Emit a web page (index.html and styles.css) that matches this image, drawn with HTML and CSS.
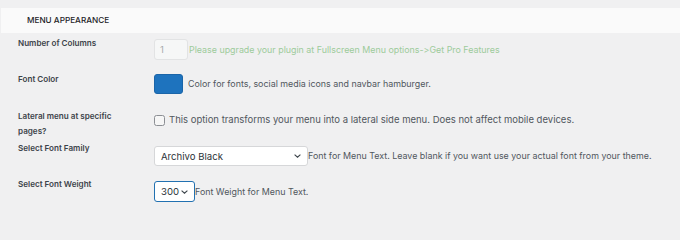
FILE: index.html
```html
<!DOCTYPE html>
<html>
<head>
<meta charset="utf-8">
<link rel="stylesheet" href="styles.css">
</head>
<body>
<div class="page">
  <div class="section-head">MENU APPEARANCE</div>
  <div class="form">
    <div class="row r1">
      <div class="label">Number of Columns</div>
      <div class="field">
        <div class="num-input">1</div>
        <span class="desc pro">Please upgrade your plugin at Fullscreen Menu options-&gt;Get Pro Features</span>
      </div>
    </div>
    <div class="row r2">
      <div class="label">Font Color</div>
      <div class="field">
        <div class="swatch"></div>
        <span class="desc gap">Color for fonts, social media icons and navbar hamburger.</span>
      </div>
    </div>
    <div class="row r3">
      <div class="label">Lateral menu at specific<br>pages?</div>
      <div class="field">
        <div class="checkbox"></div>
        <span class="desc check-text">This option transforms your menu into a lateral side menu. Does not affect mobile devices.</span>
      </div>
    </div>
    <div class="row r4">
      <div class="label">Select Font Family</div>
      <div class="field">
        <div class="select wide"><span>Archivo Black</span><svg class="chev" width="7" height="4" viewBox="0 0 7 4"><path d="M0.6 0.6 L3.5 3.2 L6.4 0.6" fill="none" stroke="#3c434a" stroke-width="1.1"/></svg></div>
        <span class="desc">Font for Menu Text. Leave blank if you want use your actual font from your theme.</span>
      </div>
    </div>
    <div class="row r5">
      <div class="label">Select Font Weight</div>
      <div class="field">
        <div class="select narrow focus"><span>300</span><svg class="chev" width="7" height="4" viewBox="0 0 7 4"><path d="M0.6 0.6 L3.5 3.2 L6.4 0.6" fill="none" stroke="#3c434a" stroke-width="1.1"/></svg></div>
        <span class="desc">Font Weight for Menu Text.</span>
      </div>
    </div>
  </div>
</div>
</body>
</html>
```
FILE: styles.css
```css
html, body {
  margin: 0;
  padding: 0;
  background: #f0f0f1;
}
body {
  font-family: Inter, "Noto Sans", sans-serif;
  font-variant-ligatures: none;
  font-feature-settings: "calt" 0, "liga" 0;
  color: #50575e;
}
.page {
  padding-top: 8px;
}
.section-head {
  margin-left: 1px;
  height: 25px;
  background: #fafafa;
  box-sizing: border-box;
  padding-left: 26px;
  font-size: 8.2px;
  font-weight: 500;
  line-height: 25px;
  color: #1d2327;
}
.form {
  padding-top: 3px;
}
.row {
  display: flex;
  align-items: flex-start;
}
.r1 { height: 36px; }
.r2 { height: 37px; }
.r3 { height: 32px; }
.r4 { height: 36px; }
.r5 { height: 34px; }
.label {
  width: 154px;
  flex: none;
  box-sizing: border-box;
  padding-left: 18px;
  font-size: 8.1px;
  font-weight: 600;
  line-height: 14.5px;
  color: #3c434a;
}
.field {
  display: flex;
  align-items: center;
}
.r1 .field { padding-top: 3px; }
.r2 .field { padding-top: 2px; }
.r3 .field { padding-top: 4px; }
.r4 .field { padding-top: 5px; }
.r5 .field { padding-top: 4px; }
.desc {
  font-size: 8.9px;
  line-height: 14px;
  color: #50575e;
  white-space: nowrap;
}
.desc.pro {
  color: #9dcb9b;
  margin-left: 1px;
}
.desc.gap {
  margin-left: 5px;
}
.desc.check-text {
  font-size: 9.5px;
  margin-left: 4px;
}
.num-input {
  width: 34px;
  height: 21px;
  box-sizing: border-box;
  border: 1px solid #e2e3e4;
  border-radius: 3px;
  background: #f6f7f7;
  color: #a7aaad;
  font-size: 9.5px;
  line-height: 19px;
  padding-left: 5px;
}
.swatch {
  width: 29px;
  height: 20px;
  box-sizing: border-box;
  background: #1e73be;
  border: 1px solid #1b65a8;
  border-radius: 3px;
}
.checkbox {
  width: 11px;
  height: 11px;
  box-sizing: border-box;
  border: 1px solid #8c8f94;
  border-radius: 2.5px;
  background: #f6f6f6;
}
.select {
  height: 20px;
  box-sizing: border-box;
  border: 1px solid #d6d7d9;
  border-radius: 3px;
  background: #ffffff;
  display: flex;
  align-items: center;
  justify-content: space-between;
  padding-left: 6px;
  padding-right: 6px;
  font-size: 9.6px;
  color: #2c3338;
}
.select.wide { width: 154px; }
.select.narrow {
  width: 41px;
  height: 21px;
}
.select.focus {
  border-color: #2271b1;
}
.chev { display: block; }
```
